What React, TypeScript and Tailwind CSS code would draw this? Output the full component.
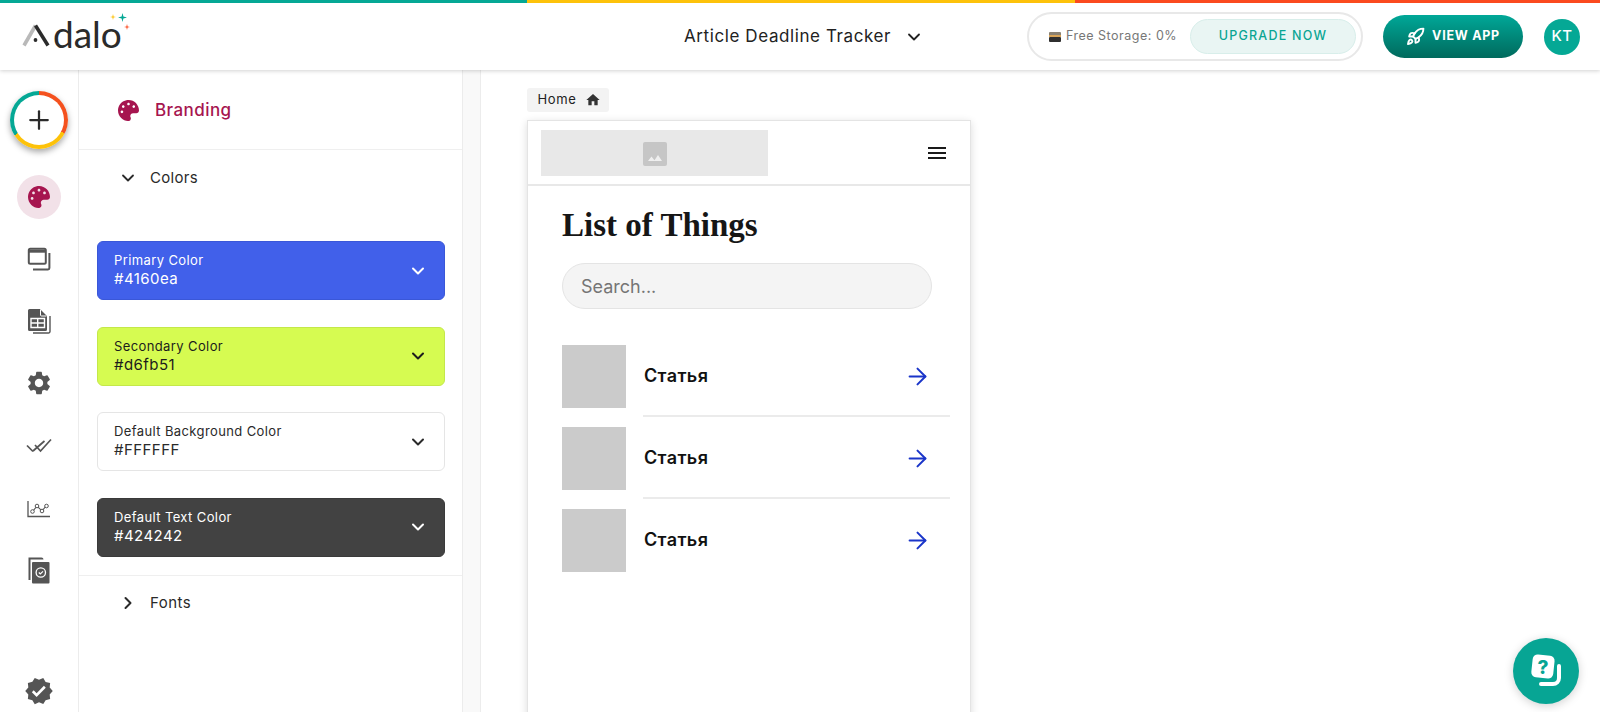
import { ArrowRight, ChevronDown, ChevronRight, Plus, Rocket } from 'lucide-react';
import { MdHome, MdMenu, MdSettings, MdVerified } from 'react-icons/md';
import { FaPalette } from 'react-icons/fa';

const sans = 'font-["Inter","Liberation_Sans",sans-serif]';

function StackIcon() {
    return (
        <svg width="24" height="24" viewBox="0 0 24 24" fill="none" stroke="#555" strokeWidth="2">
            <rect x="1.800" y="1.800" width="17" height="15" rx="1.500" />
            <path d="M1.800 4.200h17" strokeWidth="3" />
            <path d="M22.400 6v15a1.400 1.400 0 0 1-1.400 1.400H6" />
        </svg>
    );
}

function TableIcon() {
    return (
        <svg width="24" height="26" viewBox="0 0 24 26" fill="none">
            <path d="M1 2.500A1.500 1.500 0 0 1 2.500 1H13l7 7v13.500a1.500 1.500 0 0 1-1.500 1.500h-16A1.500 1.500 0 0 1 1 21.500z" fill="#555" />
            <path d="M13.500 1.500v5.500a1 1 0 0 0 1 1h5" stroke="#fff" strokeWidth="1" />
            <path d="M4 10.500h13.500v9H4zM4 15h13.500M10.700 10.500v9" stroke="#fff" strokeWidth="1.400" />
            <path d="M23 8v15.500a1.500 1.500 0 0 1-1.500 1.500H6" stroke="#555" strokeWidth="1.400" />
        </svg>
    );
}

function DoubleCheckIcon() {
    return (
        <svg width="26" height="16" viewBox="0 0 26 16" fill="none" stroke="#555" strokeWidth="1.700">
            <path d="M1 7.500l6 6" />
            <path d="M9 7l5.500 6L25 1.500" />
            <path d="M7 13l11.500-10" />
        </svg>
    );
}

function ChartIcon() {
    return (
        <svg width="24" height="18" viewBox="0 0 24 18" fill="none" stroke="#555">
            <path d="M1 1v15.500h22" strokeWidth="1.300" />
            <path d="M6 11l4-5 5 5 4-5" strokeWidth="1.100" />
            <circle cx="5.500" cy="11.500" r="1.800" fill="#fff" />
            <circle cx="10" cy="6" r="1.800" fill="#fff" />
            <circle cx="15" cy="11" r="1.800" fill="#fff" />
            <circle cx="19.500" cy="6" r="1.800" fill="#fff" />
        </svg>
    );
}

function PageCheckIcon() {
    return (
        <svg width="22" height="28" viewBox="0 0 22 28" fill="none">
            <path d="M1.500 23V1.500h12a1 1 0 0 1 1 1" stroke="#555" strokeWidth="2" />
            <rect x="4" y="5" width="17.500" height="21.500" rx="1" fill="#555" />
            <circle cx="12.800" cy="15.500" r="4.700" stroke="#fff" strokeWidth="1.300" />
            <path d="M10.800 15.500l1.500 1.500 2.700-2.700" stroke="#fff" strokeWidth="1.200" />
        </svg>
    );
}

function StorageIcon() {
    return (
        <svg width="12" height="10" viewBox="0 0 12 10">
            <rect x="0" y="0" width="12" height="4" rx="1" fill="#8a8172" />
            <rect x="0" y="3" width="12" height="2" fill="#d9a457" />
            <rect x="0" y="5" width="12" height="5" rx="1" fill="#2f2f2f" />
        </svg>
    );
}

function LogoMark() {
    return (
        <svg width="28" height="24" viewBox="0 0 28 24" fill="none" strokeWidth="3.600">
            <path d="M2 22.500 13.500 2.500" stroke="#b9b9b9" />
            <path d="M13.500 2.500 26 22.500" stroke="#2b2b2b" />
            <circle cx="13.500" cy="17" r="1.900" fill="#2b2b2b" stroke="none" />
        </svg>
    );
}

function Sparkle({ color, size }: { color: string; size: number }) {
    return (
        <svg width={size} height={size} viewBox="0 0 10 10">
            <path d="M5 0 6 4 10 5 6 6 5 10 4 6 0 5 4 4z" fill={color} />
        </svg>
    );
}

function HelpIcon() {
    return (
        <svg width="34" height="36" viewBox="0 0 34 36">
            <path d="M30 13v12a6 6 0 0 1-6 6H12" fill="none" stroke="#fff" strokeWidth="4" strokeLinecap="round" />
            <rect x="3" y="2" width="22" height="23" rx="5" fill="#fff" transform="rotate(6 14 13)" />
            <text x="14" y="21" textAnchor="middle" fontSize="19" fontWeight="800" fill="#07a594" fontFamily="Inter, sans-serif">?</text>
        </svg>
    );
}

const colorCards = [
    { label: 'Primary Color', value: '#4160ea', box: 'bg-[#4160ea] border-[#3a57d8] text-white' },
    { label: 'Secondary Color', value: '#d6fb51', box: 'bg-[#d6fb51] border-[#c4e84a] text-[#1c1c1c]' },
    { label: 'Default Background Color', value: '#FFFFFF', box: 'bg-white border-[#e5e5e5] text-[#2a2a2a]' },
    { label: 'Default Text Color', value: '#424242', box: 'bg-[#424242] border-[#3a3a3a] text-white' },
];

function ColorCard({ label, value, box }: { label: string; value: string; box: string }) {
    return (
        <div className={`flex h-[59px] w-[348px] items-center justify-between rounded-[6px] border pl-[16px] pr-[16px] ${box}`}>
            <div className="-mt-[2px]">
                <div className="text-[13px] leading-[18px] tracking-[0.03em]">{label}</div>
                <div className="text-[15px] leading-[19px] tracking-[0.03em]">{value}</div>
            </div>
            <ChevronDown className="h-[20px] w-[20px]" strokeWidth={2.400} />
        </div>
    );
}

function ListRow({ divider }: { divider: boolean }) {
    return (
        <div className="flex h-[82px] flex-col">
            <div className="flex h-[63px] items-center">
                <div className="h-[63px] w-[64px] shrink-0 bg-[#cbcbcb]" />
                <div className="-mt-[3px] ml-[18px] flex-1 text-[18px] font-semibold tracking-[0.02em] text-[#111]">Статья</div>
                <ArrowRight className="mr-[5px] h-[27px] w-[27px] text-[#1a35c9]" strokeWidth={1.800} />
            </div>
            {divider && <div className="ml-[81px] mr-[-14px] mt-[7px] h-[2px] bg-[#ebebeb]" />}
        </div>
    );
}

export default function App() {
    return (
        <div className={`relative flex h-[712px] w-full flex-col overflow-hidden bg-white ${sans}`}>
            <div className="relative z-10 h-[70px] shrink-0 bg-white shadow-[0_1px_4px_rgba(0,0,0,0.18)]">
                <div className="flex h-[3px]">
                    <div className="w-[527px] bg-[#05a895]" />
                    <div className="w-[548px] bg-[#fdc20a]" />
                    <div className="flex-1 bg-[#fb4a1f]" />
                </div>
                <div className="flex h-[67px] items-center">
                    <div className="w-[684px] pl-[22px]">
                        <div className="relative mb-[6px] flex w-fit items-end">
                            <LogoMark />
                            <span className="ml-[3px] text-[37px] leading-[26px] text-[#2b2b2b] font-['Lato',sans-serif]">dalo</span>
                            <div className="absolute left-[88px] top-[-7px]"><Sparkle color="#fdc20a" size={6} /></div>
                            <div className="absolute left-[96px] top-[-8px]"><Sparkle color="#05a895" size={9} /></div>
                            <div className="absolute left-[102px] top-[3px]"><Sparkle color="#fb4a1f" size={6} /></div>
                        </div>
                    </div>
                    <span className="text-[17px] tracking-[0.035em] text-[#222]">Article Deadline Tracker</span>
                    <ChevronDown className="ml-[13px] h-[20px] w-[20px] text-[#222]" strokeWidth={2.200} />
                    <div className="ml-auto flex items-center pr-[20px]">
                        <div className="flex h-[49px] w-[336px] items-center rounded-full border-2 border-[#e8e8e8] pl-[20px] pr-[5px]">
                            <StorageIcon />
                            <span className="ml-[5px] text-[12.500px] tracking-[0.04em] text-[#777]">Free Storage: 0%</span>
                            <div className="ml-auto flex h-[35px] w-[166px] items-center justify-center rounded-full border border-[#d8eeea] bg-[#e9f5f3] text-[12.500px] font-medium tracking-[0.1em] text-[#0aa594]">
                                UPGRADE NOW
                            </div>
                        </div>
                        <div className="ml-[20px] flex h-[43px] w-[140px] items-center justify-center gap-[7px] rounded-full bg-gradient-to-b from-[#00a898] to-[#006a5d] text-[12.500px] font-bold tracking-[0.06em] text-white">
                            <Rocket className="h-[19px] w-[19px]" strokeWidth={2.400} />
                            VIEW APP
                        </div>
                        <div className="ml-[21px] flex h-[36px] w-[36px] items-center justify-center rounded-full bg-[#05a895] text-[15px] font-medium tracking-[0.03em] text-white">
                            KT
                        </div>
                    </div>
                </div>
            </div>

            <div className="flex min-h-0 flex-1">
                <div className="flex w-[79px] shrink-0 flex-col items-center border-r border-[#ececec] pb-[6px] pt-[21px]">
                    <div className="flex h-[58px] w-[58px] items-center justify-center rounded-full bg-[conic-gradient(#f4511e_0deg_118deg,#fdc20a_118deg_238deg,#05a895_238deg_360deg)] shadow-[0_3px_6px_rgba(0,0,0,0.35)]">
                        <div className="flex h-[50px] w-[50px] items-center justify-center rounded-full bg-white">
                            <Plus className="h-[30px] w-[30px] text-[#2b2b2b]" strokeWidth={1.800} />
                        </div>
                    </div>
                    <div className="mt-[26px] flex h-[44px] w-[44px] items-center justify-center rounded-full bg-[#f2e1e8]">
                        <FaPalette className="h-[22px] w-[22px] text-[#a6154f]" />
                    </div>
                    <div className="mt-[9px] flex flex-col">
                        <div className="flex h-[62px] items-center justify-center"><StackIcon /></div>
                        <div className="flex h-[62px] items-center justify-center"><TableIcon /></div>
                        <div className="flex h-[62px] items-center justify-center"><MdSettings className="h-[28px] w-[28px] text-[#555]" /></div>
                        <div className="flex h-[63px] items-center justify-center"><DoubleCheckIcon /></div>
                        <div className="flex h-[63px] items-center justify-center"><ChartIcon /></div>
                        <div className="flex h-[62px] items-center justify-center"><PageCheckIcon /></div>
                    </div>
                    <MdVerified className="mt-auto h-[30px] w-[30px] text-[#555]" />
                </div>

                <div className="w-[383px] shrink-0">
                    <div className="flex h-[80px] items-center border-b border-[#efefef] pl-[39px] pt-[2px]">
                        <FaPalette className="h-[21px] w-[21px] text-[#a6154f]" />
                        <span className="ml-[16px] text-[17px] font-medium tracking-[0.025em] text-[#a6154f]">Branding</span>
                    </div>
                    <div className="flex h-[56px] items-center pl-[39px] text-[#2a2a2a]">
                        <ChevronDown className="h-[20px] w-[20px]" strokeWidth={2.200} />
                        <span className="ml-[12px] text-[15px] tracking-[0.02em]">Colors</span>
                    </div>
                    <div className="flex flex-col gap-[26.600px] pl-[18px] pt-[35px]">
                        {colorCards.map((card) => (
                            <ColorCard key={card.label} {...card} />
                        ))}
                    </div>
                    <div className="mt-[18px] flex h-[56px] items-center border-t border-[#efefef] pl-[39px] text-[#2a2a2a]">
                        <ChevronRight className="h-[20px] w-[20px]" strokeWidth={2.400} />
                        <span className="ml-[12px] text-[15px] tracking-[0.03em]">Fonts</span>
                    </div>
                </div>

                <div className="w-[19px] shrink-0 border-x border-[#ececec] bg-[#f9f9f9]" />

                <div className="min-w-0 flex-1 pl-[46px] pt-[18px]">
                    <div className="flex h-[24px] w-[82px] items-center justify-center gap-[8px] rounded-[3px] bg-[#f3f3f3] pl-[2px] text-[13px] tracking-[0.05em] text-[#222]">
                        Home
                        <MdHome className="h-[16px] w-[16px] text-[#333]" />
                    </div>
                    <div className="mt-[8px] h-[640px] w-[444px] border border-[#e4e4e4] shadow-[0_2px_8px_rgba(0,0,0,0.14)]">
                        <div className="flex h-[65px] items-center justify-between border-b-2 border-[#e8e8e8] pl-[13px] pr-[21px]">
                            <div className="flex h-[46px] w-[227px] items-center justify-center bg-[#e8e8e8]">
                                <div className="mt-[2px] flex h-[24px] w-[24px] items-end justify-center rounded-[2px] bg-[#c6c6c6] pb-[5px]">
                                    <svg width="14" height="6" viewBox="0 0 14 6"><path d="M0 6 3.500 1.500 7 6zM6 6 10 0l4 6z" fill="#efefef" /></svg>
                                </div>
                            </div>
                            <MdMenu className="h-[24px] w-[24px] text-[#1a1a1a]" />
                        </div>
                        <div className="px-[34px] pt-[19px]">
                            <div className="text-[33px] font-bold leading-[40px] text-[#161616] font-['Liberation_Serif',serif]">List of Things</div>
                            <div className="mt-[18px] flex h-[46px] w-[370px] items-center rounded-full border border-[#e4e4e4] bg-[#f4f4f4] pl-[18px] text-[18px] text-[#757575]">
                                Search...
                            </div>
                            <div className="mt-[36px]">
                                <ListRow divider />
                                <ListRow divider />
                                <ListRow divider={false} />
                            </div>
                        </div>
                    </div>
                </div>
            </div>

            <div className="absolute left-[1513px] top-[638px] flex h-[66px] w-[66px] items-center justify-center rounded-full bg-[#07a594] shadow-[0_2px_10px_rgba(0,0,0,0.18)]">
                <HelpIcon />
            </div>
        </div>
    );
}
